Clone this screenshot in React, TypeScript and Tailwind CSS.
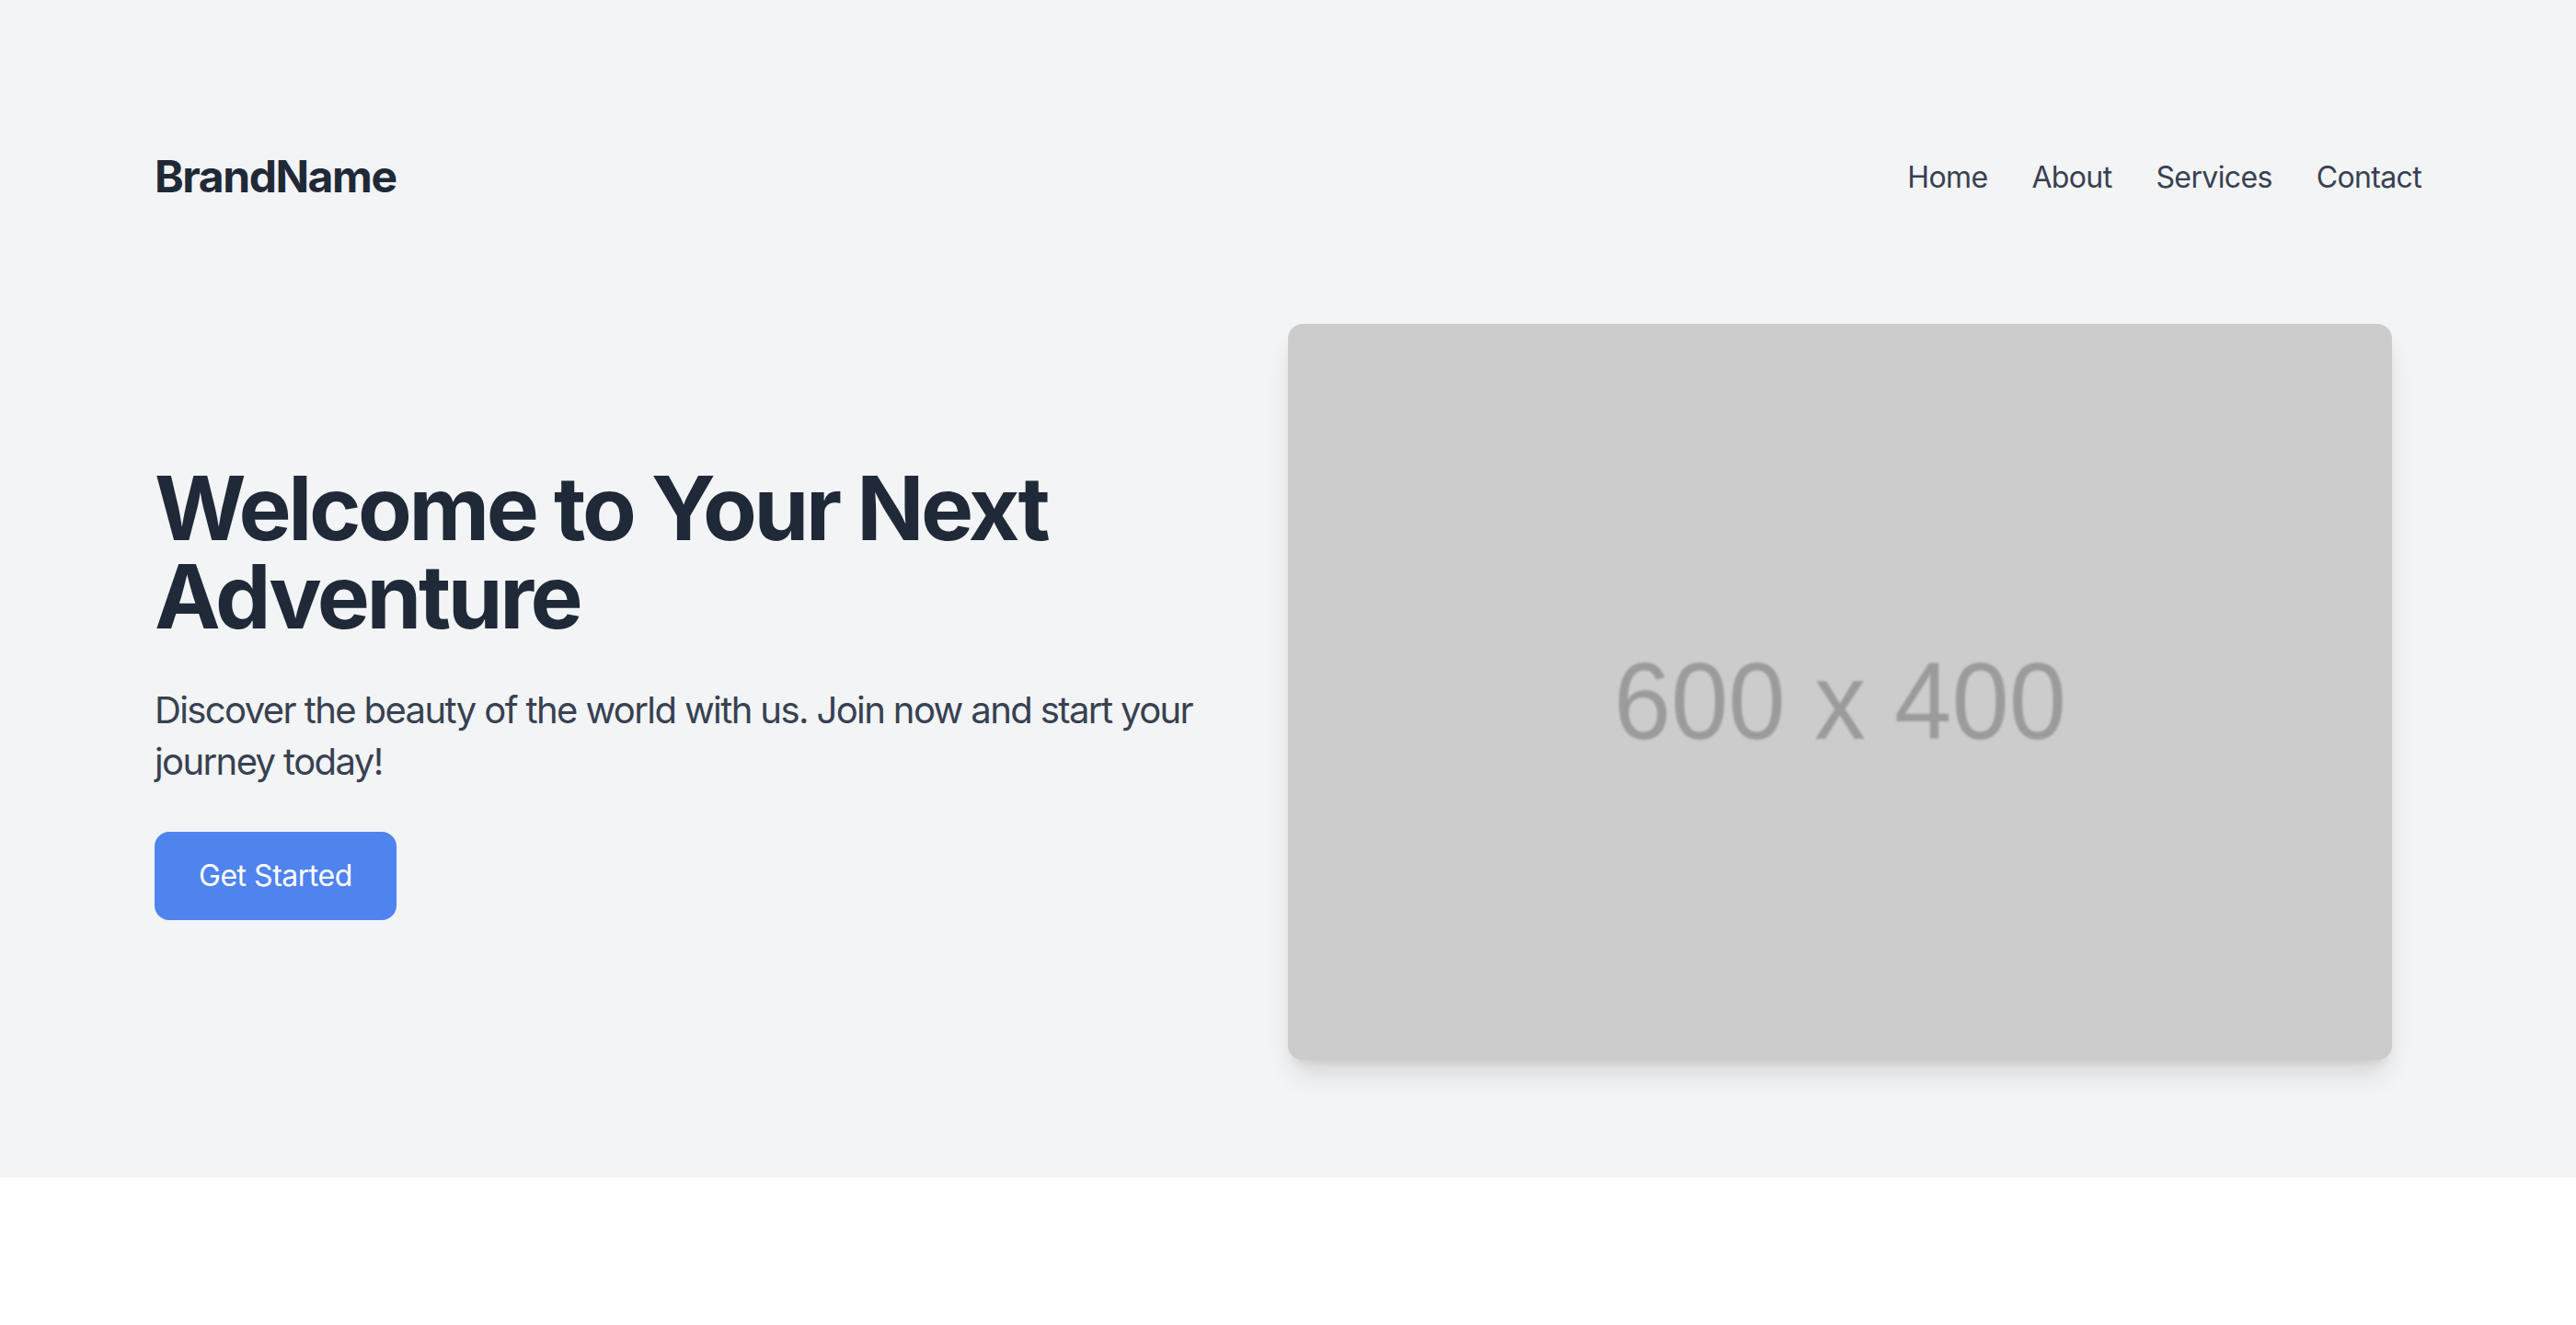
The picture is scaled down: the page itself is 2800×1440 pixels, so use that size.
import React from "react";

const links = ["Home", "About", "Services", "Contact"];

const App: React.FC = () => {
  return (
    <div className="min-h-screen bg-white font-['Inter',sans-serif]">
      <section className="bg-[#f3f4f6] pt-[128px] pb-[128px]">
        <div className="mx-auto max-w-[2560px] px-[48px]">
          <header className="flex items-center justify-between py-[32px]">
            <div className="text-[48px] leading-[64px] font-bold tracking-[-0.03em] text-[#1f2937]">BrandName</div>
            <nav className="flex items-center gap-x-[48px] pt-[2px]">
              {links.map((l) => (
                <a
                  key={l}
                  href="#"
                  className="text-[32px] leading-[48px] tracking-[-0.02em] text-[#374151] hover:text-[#111827]"
                >
                  {l}
                </a>
              ))}
            </nav>
          </header>

          <div className="mt-[96px] flex items-center">
            <div className="w-1/2">
              <h1 className="mb-[48px] text-[96px] leading-[96px] font-bold tracking-[-0.035em] text-[#1f2937]">
                Welcome to Your Next Adventure
              </h1>
              <p className="mb-[48px] text-[40px] leading-[56px] tracking-[-0.04em] text-[#374151]">
                Discover the beauty of the world with us. Join now and start your journey today!
              </p>
              <button className="rounded-[16px] bg-[#4f83ee] px-[48px] py-[24px] text-[32px] leading-[48px] tracking-[-0.015em] text-white hover:bg-[#3b6fd9]">
                Get Started
              </button>
            </div>
            <div className="w-1/2">
              <div className="flex h-[800px] w-[1200px] items-center justify-center rounded-[16px] bg-[#cccccc] shadow-[0_20px_30px_-6px_rgba(0,0,0,0.12),0_8px_12px_-6px_rgba(0,0,0,0.1)]">
                <span className="pt-[20px] font-['Liberation_Sans',Arial,sans-serif] text-[112px] leading-none text-[#9b9b9b] scale-y-[1.06] blur-[1px]">
                  600 x 400
                </span>
              </div>
            </div>
          </div>
        </div>
      </section>
    </div>
  );
};

export default App;
